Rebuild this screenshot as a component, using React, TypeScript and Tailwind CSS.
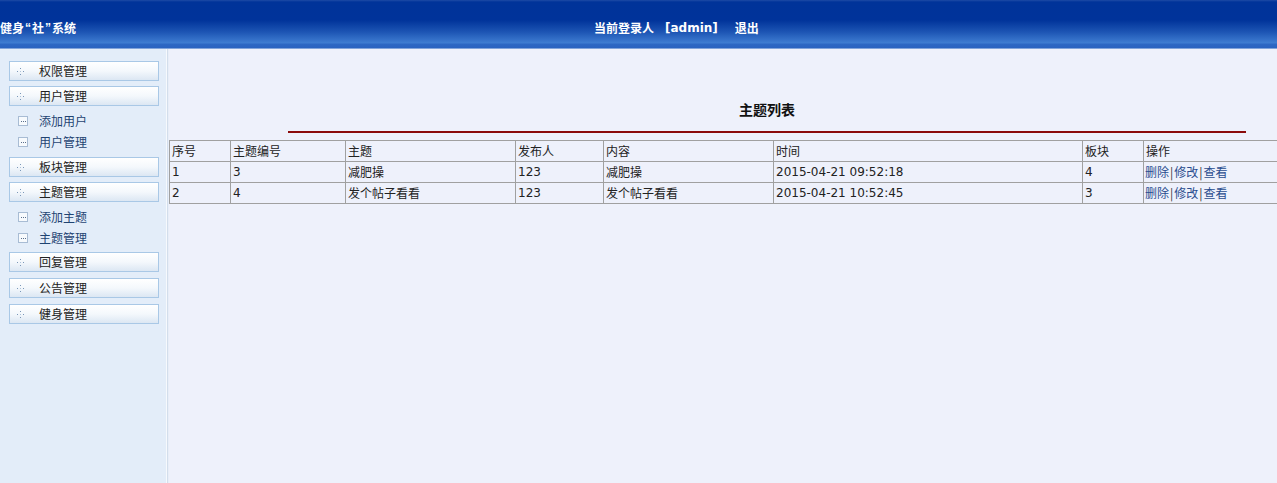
import React from "react";

const cn = '"Noto Sans CJK SC", "DejaVu Sans", sans-serif';
const num = '"DejaVu Sans", "Noto Sans CJK SC", sans-serif';
const lat = '"Liberation Sans", sans-serif';

function Dots() {
  return (
    <svg width="7" height="7" viewBox="0 0 7 7" className="shrink-0">
      <rect x="3" y="0" width="1" height="1" fill="#7a97b8" />
      <rect x="0" y="3" width="1" height="1" fill="#7a97b8" />
      <rect x="6" y="3" width="1" height="1" fill="#7a97b8" />
      <rect x="3" y="6" width="1" height="1" fill="#7a97b8" />
      <rect x="3" y="3" width="1" height="1" fill="#b0c4da" />
    </svg>
  );
}

function SubIcon() {
  return (
    <svg width="10" height="10" viewBox="0 0 10 10" className="shrink-0">
      <rect x="0.5" y="0.5" width="9" height="9" fill="#f7fafd" stroke="#a8bcd4" />
      <rect x="3" y="5" width="1" height="1" fill="#5a6f8c" />
      <rect x="5" y="5" width="1" height="1" fill="#5a6f8c" />
      <rect x="7" y="5" width="1" height="1" fill="#5a6f8c" />
    </svg>
  );
}

function MenuBox({ label }: { label: string }) {
  return (
    <div className="flex h-[20px] w-[150px] items-center border border-[#a9c8e6] bg-gradient-to-b from-[#ffffff] via-[#f4f8fc] to-[#dce7f3] pl-[7px] text-[12px] text-[#222]">
      <Dots />
      <span className="ml-[15px] leading-none">{label}</span>
    </div>
  );
}

function SubItem({ label }: { label: string }) {
  return (
    <div className="flex h-[21px] items-center pl-[9px] text-[12px] text-[#1f4472]">
      <SubIcon />
      <span className="ml-[11px] leading-none">{label}</span>
    </div>
  );
}

const cols = [61, 115, 170, 88, 170, 309, 61, 222];
const headers = ["序号", "主题编号", "主题", "发布人", "内容", "时间", "板块", "操作"];
const rows = [
  ["1", "3", "减肥操", "123", "减肥操", "2015-04-21 09:52:18", "4"],
  ["2", "4", "发个帖子看看", "123", "发个帖子看看", "2015-04-21 10:52:45", "3"],
];

export default function App() {
  return (
    <div className="h-[483px] w-[1277px] overflow-hidden bg-[#eef1fb]" style={{ fontFamily: cn }}>
      <div className="relative flex h-[49px] w-full items-center bg-[linear-gradient(to_bottom,#1e4ba6_0px,#003399_2px,#00339a_20px,#1d55b4_32px,#3f7dd2_43px,#2d68c4_44px,#2a63c0_48px,#d9e4f3_49px)] text-white">
        <div className="absolute left-0 top-[22px] flex text-[12px] font-bold leading-none">
          <span>健身</span>
          <span className="mx-[1px]" style={{ fontFamily: lat }}>“</span>
          <span>社</span>
          <span className="mx-[1px]" style={{ fontFamily: lat }}>”</span>
          <span>系统</span>
        </div>
        <div className="absolute left-[594px] top-[22px] flex text-[12px] font-bold leading-none">
          <span>当前登录人</span>
          <span className="ml-[11px]" style={{ fontFamily: num }}>[admin]</span>
          <span className="ml-[17px]">退出</span>
        </div>
      </div>
      <div className="flex h-[434px]">
        <div className="flex w-[166px] shrink-0 flex-col bg-[#e3edf9] pl-[9px] pt-[12px]">
          <MenuBox label="权限管理" />
          <div className="mt-[5px]"><MenuBox label="用户管理" /></div>
          <div className="pb-[5px] pt-[4px]">
            <SubItem label="添加用户" />
            <SubItem label="用户管理" />
          </div>
          <MenuBox label="板块管理" />
          <div className="mt-[5px]"><MenuBox label="主题管理" /></div>
          <div className="py-[4px]">
            <SubItem label="添加主题" />
            <SubItem label="主题管理" />
          </div>
          <MenuBox label="回复管理" />
          <div className="mt-[6px]"><MenuBox label="公告管理" /></div>
          <div className="mt-[6px]"><MenuBox label="健身管理" /></div>
        </div>
        <div className="w-[1px] shrink-0 bg-[#f6f9fd]" />
        <div className="w-[1px] shrink-0 bg-[#d3deec]" />
        <div className="w-[1px] shrink-0 bg-[#e8eef8]" />
        <div className="w-[1196px] shrink-0 bg-[#eef1fb]">
          <div className="pt-[51px] text-center text-[14px] font-bold leading-[18px] text-[#111]">主题列表</div>
          <div className="mx-auto mt-[13px] h-[2px] w-[958px] bg-[#8b0b0b]" />
          <table className="mt-[7px] w-[1196px] table-fixed border-collapse text-[12px] text-[#222]">
            <colgroup>
              {cols.map((w, i) => (
                <col key={i} style={{ width: w }} />
              ))}
            </colgroup>
            <tbody>
              <tr className="h-[21px]">
                {headers.map((h) => (
                  <td key={h} className="border border-[#a0a0a0] pl-[2px] align-middle leading-none">{h}</td>
                ))}
              </tr>
              {rows.map((r) => (
                <tr key={r[0]} className="h-[21px]">
                  {r.map((c, i) => (
                    <td
                      key={i}
                      className="border border-[#a0a0a0] pl-[2px] align-middle leading-none"
                      style={{ fontFamily: /^[0-9]/.test(c) ? num : cn }}
                    >
                      {c}
                    </td>
                  ))}
                  <td className="border border-[#a0a0a0] pl-[1px] align-middle leading-none">
                    <span className="text-[#2a4d8f]">删除</span>
                    <span className="mx-[1px] text-[#333]">|</span>
                    <span className="text-[#2a4d8f]">修改</span>
                    <span className="mx-[1px] text-[#333]">|</span>
                    <span className="text-[#2a4d8f]">查看</span>
                  </td>
                </tr>
              ))}
            </tbody>
          </table>
        </div>
      </div>
    </div>
  );
}
